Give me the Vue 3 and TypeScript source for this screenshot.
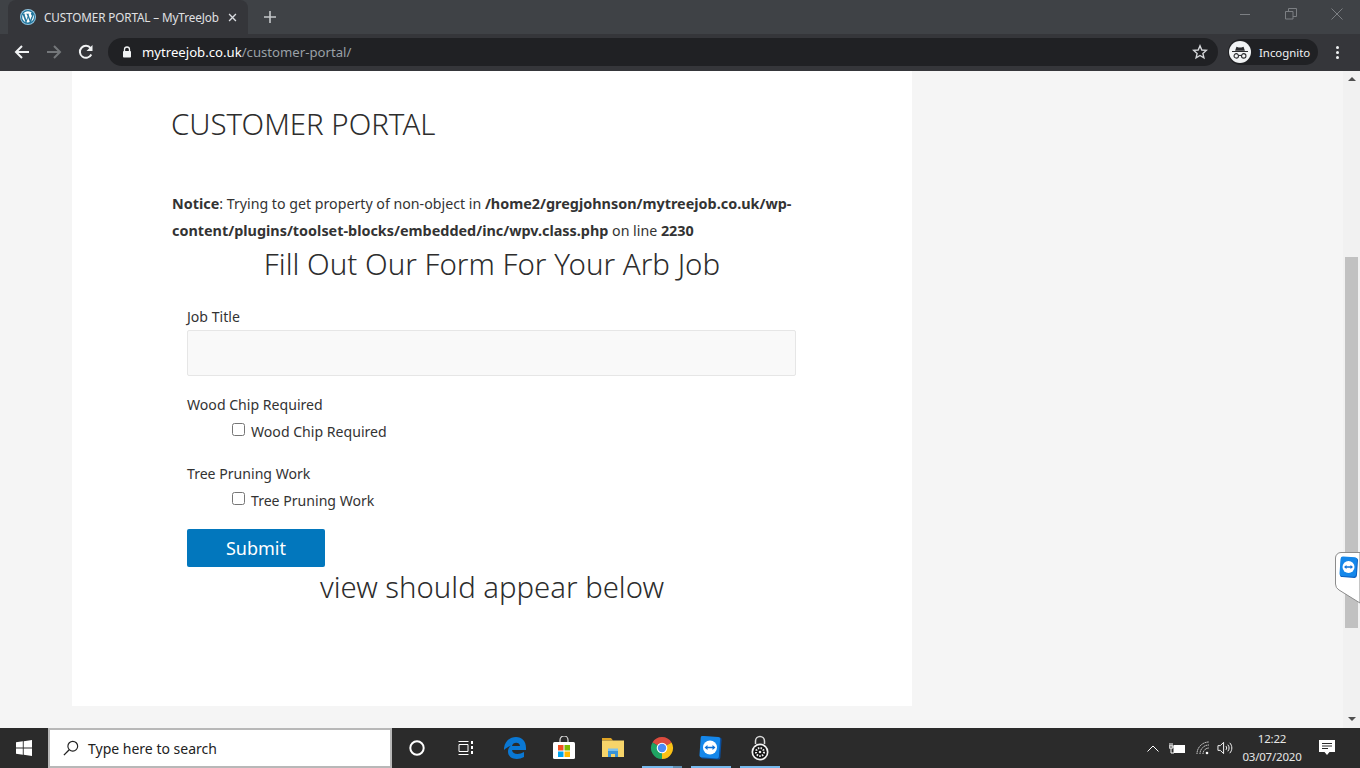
<template>
  <div class="screen">
    <div class="tabstrip">
      <div class="tab">
        <svg class="favicon" viewBox="0 0 16 16">
          <circle cx="8" cy="8" r="8" fill="#8fc3e0" />
          <circle cx="8" cy="8" r="7" fill="#21759b" />
          <path d="M2.200 8c0 2.300 1.300 4.300 3.300 5.200L2.700 5.600C2.400 6.300 2.200 7.100 2.200 8zM12 7.700c0-.7-.3-1.200-.5-1.600-.3-.5-.6-.9-.6-1.400 0-.5.4-1 1-1h.1C10.900 3.100 9.500 2.200 8 2.200c-2 0-3.800 1-4.800 2.600h.4c.6 0 1.500-.1 1.500-.1.300 0 .3.400 0 .5 0 0-.3 0-.6.100l1.900 5.700 1.200-3.500-.8-2.200c-.3 0-.6-.1-.6-.1-.3 0-.3-.5 0-.5 0 0 .9.100 1.400.100.600 0 1.500-.1 1.500-.1.300 0 .3.400 0 .5 0 0-.3 0-.6.100l1.900 5.600.5-1.700c.3-.8.500-1.300.5-1.800zM8.100 8.500l-1.600 4.700c.5.100 1 .2 1.500.2.600 0 1.200-.1 1.800-.3l-1.700-4.600zM13.200 5.200c0 .2.100.4.100.600 0 .6-.1 1.300-.4 2.100l-1.700 4.800c1.600-.9 2.700-2.700 2.700-4.700 0-1-.3-2-.7-2.800z" fill="#fff" />
        </svg>
        <span class="tab-title">CUSTOMER PORTAL – MyTreeJob</span>
        <svg class="tab-close" viewBox="0 0 10 10">
          <path d="M1.200 1.200l7.600 7.600M8.800 1.200L1.200 8.800" stroke="#dadce0" stroke-width="1.500" />
        </svg>
      </div>
      <svg class="new-tab" viewBox="0 0 12 12">
        <path d="M6 0v12M0 6h12" stroke="#c5c7ca" stroke-width="1.600" />
      </svg>
      <div class="window-controls">
        <svg viewBox="0 0 12 12"><path d="M1 6.500h10" stroke="#7c7f83" /></svg>
        <svg viewBox="0 0 12 12"><path d="M.5 3.500h7.500v7.500H.5zM3.500 3.500V.5h8v8H8" fill="none" stroke="#7c7f83" /></svg>
        <svg viewBox="0 0 12 12"><path d="M.5.500l11 11M11.500.500l-11 11" stroke="#7c7f83" /></svg>
      </div>
    </div>

    <div class="toolbar">
      <svg class="nav-icon" viewBox="0 0 16 16">
        <path d="M15 8H2M8 2L2 8l6 6" fill="none" stroke="#f1f3f4" stroke-width="2" />
      </svg>
      <svg class="nav-icon" viewBox="0 0 16 16">
        <path d="M1 8h13M8 2l6 6-6 6" fill="none" stroke="#74777a" stroke-width="2" />
      </svg>
      <svg class="nav-icon" viewBox="0 0 16 16">
        <path d="M13.300 10.500A6 6 0 1 1 12.600 4.100" fill="none" stroke="#f1f3f4" stroke-width="2" />
        <path d="M14.500 1v6h-6z" fill="#f1f3f4" />
      </svg>
      <div class="omnibox">
        <svg class="lock" viewBox="0 0 10 12">
          <path d="M2.500 5V3.500a2.500 2.500 0 0 1 5 0V5" fill="none" stroke="#f1f3f4" stroke-width="1.300" />
          <rect x="1" y="5" width="8" height="6.500" rx=".8" fill="#f1f3f4" />
        </svg>
        <span class="url"><b>mytreejob.co.uk</b>/customer-portal/</span>
        <svg class="star" viewBox="0 0 16 16">
          <path d="M8 1.800l1.800 4.200 4.500.4-3.400 3 1 4.400L8 11.500l-3.900 2.300 1-4.400-3.400-3 4.500-.4z" fill="none" stroke="#d5d7da" stroke-width="1.400" />
        </svg>
      </div>
      <div class="incognito">
        <span class="incognito-badge">
          <svg viewBox="0 0 18 14">
            <path d="M3.500 5l1.500-4.500 2.500.8h3l2.500-.8L14.500 5zM0 5.300h18v1.200H0z" fill="#2a2b2e" />
            <circle cx="4.800" cy="10.800" r="2.500" fill="none" stroke="#2a2b2e" stroke-width="1.200" />
            <circle cx="13.200" cy="10.800" r="2.500" fill="none" stroke="#2a2b2e" stroke-width="1.200" />
            <path d="M7.300 10.300h3.400" stroke="#2a2b2e" stroke-width="1.200" />
          </svg>
        </span>
        <span>Incognito</span>
      </div>
      <div class="kebab"><i></i><i></i><i></i></div>
    </div>

    <div class="viewport">
      <main class="page">
        <article class="card">
          <h1 class="entry-title">CUSTOMER PORTAL</h1>
          <p class="notice">
            <b>Notice</b>: Trying to get property of non-object in
            <b>/home2/gregjohnson/mytreejob.co.uk/wp-content/plugins/toolset-blocks/embedded/inc/wpv.class.php</b>
            on line <b>2230</b>
          </p>
          <h2 class="center-title">Fill Out Our Form For Your Arb Job</h2>
          <form class="job-form" @submit.prevent>
            <label class="field-label" for="job-title">Job Title</label>
            <input id="job-title" class="text-input" type="text" />
            <div v-for="item in checks" :key="item" class="check-group">
              <div class="field-label">{{ item }}</div>
              <label class="check-row">
                <input type="checkbox" />
                <span>{{ item }}</span>
              </label>
            </div>
            <button class="submit" type="submit">Submit</button>
          </form>
          <h2 class="center-title below">view should appear below</h2>
        </article>
      </main>
      <div class="scrollbar">
        <span class="arrow up"></span>
        <div class="track"><div class="thumb"></div></div>
        <span class="arrow down"></span>
      </div>
      <svg class="tv-tab" viewBox="0 0 25 54">
        <path d="M.5 6A5.500 5.500 0 0 1 6 .5H25V51L4 38Q.5 36 .5 32z" fill="#fff" stroke="#8c8c8c" />
        <g transform="translate(5 5)">
          <rect x="0.500" y="0.500" width="17" height="20" rx="2.500" fill="#0b5fc0" transform="rotate(4 9 10)" />
          <rect x="0" y="0" width="16.500" height="19.500" rx="2.500" fill="#1487ea" transform="rotate(4 9 10)" />
          <circle cx="8.500" cy="10" r="6" fill="#fff" />
          <path d="M4 10l2.500-2v1.300h4V8L13 10l-2.500 2v-1.300h-4V12z" fill="#0e70d6" />
        </g>
      </svg>
    </div>

    <div class="taskbar">
      <svg class="win-logo" viewBox="0 0 16 16">
        <path d="M0 2.300l6.800-1v6.200H0zM7.700 1.200L16 0v7.500H7.700zM0 8.500h6.800v6.200L0 13.700zM7.700 8.500H16V16l-8.300-1.200z" fill="#fff" />
      </svg>
      <div class="search">
        <svg viewBox="0 0 18 18">
          <circle cx="11" cy="7" r="5.500" fill="none" stroke="#222" stroke-width="1.300" />
          <path d="M7 11l-6 6" stroke="#222" stroke-width="1.500" />
        </svg>
        <span>Type here to search</span>
      </div>
      <div class="task-icons">
        <div class="task-icon">
          <svg class="s16" viewBox="0 0 16 16"><circle cx="8" cy="8" r="6.700" fill="none" stroke="#fff" stroke-width="2" /></svg>
        </div>
        <div class="task-icon">
          <svg class="s16" viewBox="0 0 16 16">
            <path d="M.5 1.500h10M.5 14.500h10M1 4.500h9v7H1z" fill="none" stroke="#fff" />
            <path d="M13 1h2v3h-2zM13 6h2v3h-2zM13 11h2v3h-2z" fill="#fff" />
          </svg>
        </div>
        <div class="task-icon">
          <svg class="s22" viewBox="0 0 22 22">
            <path d="M0 11C1 4 6 0 12 0c6 0 10 4 10 11v2H8c.5 4.500 7 5 12 2v5c-6 3.500-16 2.500-16-5.500 0-2.500 1-4.500 3-6-2 1-5 2.500-7 4.500zM8 9h8c0-4.500-7.500-4.500-8 0z" fill="#0a78d4" />
          </svg>
        </div>
        <div class="task-icon">
          <svg class="s24" viewBox="0 0 24 24">
            <path d="M8 7V4a4 4 0 0 1 8 0v3" fill="none" stroke="#ddd" stroke-width="1.200" />
            <rect x="1" y="6" width="22" height="17" rx="1.500" fill="#fff" />
            <rect x="6" y="9" width="5.500" height="5.500" fill="#f25022" />
            <rect x="12.500" y="9" width="5.500" height="5.500" fill="#7fba00" />
            <rect x="6" y="15.500" width="5.500" height="5.500" fill="#00a4ef" />
            <rect x="12.500" y="15.500" width="5.500" height="5.500" fill="#ffb900" />
          </svg>
        </div>
        <div class="task-icon">
          <svg class="s24" viewBox="0 0 24 22">
            <path d="M1 1h9l2 2.500h-11z" fill="#e0a526" />
            <path d="M1 3.500h22V20H1z" fill="#f6d46a" />
            <path d="M7 20v-6h10v6h-3v-3h-4v3z" fill="#3a94d8" />
            <path d="M7 11.500h10V14H7z" fill="#7cc2ee" />
          </svg>
        </div>
        <div class="task-icon">
          <svg class="s24" viewBox="0 0 24 24">
            <path d="M12 12L2.470 6.500A11 11 0 0 1 21.530 6.500z" fill="#dd4b3e" />
            <path d="M12 12L21.530 6.500A11 11 0 0 1 12 23z" fill="#fbc116" />
            <path d="M12 12V23A11 11 0 0 1 2.470 6.500z" fill="#1fa463" />
            <circle cx="12" cy="12" r="5.300" fill="#fff" />
            <circle cx="12" cy="12" r="4.200" fill="#4c8bf5" />
          </svg>
        </div>
        <div class="task-icon">
          <svg class="s24" viewBox="0 0 24 24">
            <rect x="2" y="1" width="20" height="22" rx="2" fill="#0b4f9e" transform="rotate(4 12 12)" />
            <rect x="1" y="0.500" width="19.500" height="21.500" rx="2" fill="#1587ea" transform="rotate(4 12 12)" />
            <circle cx="11" cy="11.500" r="7" fill="#fff" />
            <path d="M5.500 11.500l3-2.500v1.700h5V9l3 2.500-3 2.500v-1.700h-5V14z" fill="#0e70d6" />
          </svg>
        </div>
        <div class="task-icon">
          <svg class="s26" viewBox="0 0 20 26">
            <path d="M5.500 9V6a4.500 4.500 0 0 1 9 0v3" fill="none" stroke="#d8d8d8" stroke-width="1.500" />
            <circle cx="10" cy="17" r="8.500" fill="#f4f4f4" />
            <circle cx="10" cy="17" r="6.800" fill="#111" />
            <circle cx="10" cy="17" r="4" fill="none" stroke="#eee" stroke-dasharray="1.500 1.200" stroke-width="2" />
            <circle cx="10" cy="17" r="1.300" fill="#eee" />
          </svg>
        </div>
      </div>
      <div class="running-marks"><i class="chrome"></i><i class="chrome-split"></i><i class="viewer"></i><i class="lockapp"></i></div>
      <div class="tray">
        <svg class="caret" viewBox="0 0 12 7"><path d="M.5 6.500L6 1l5.500 5.500" fill="none" stroke="#fff" /></svg>
        <svg class="battery" viewBox="0 0 16 11">
          <rect x="5" y="2.500" width="10.500" height="7" fill="#fff" stroke="#fff" />
          <path d="M1 0v3M3 0v3M0 3h4v2H0zM2 5v5h3" stroke="#fff" fill="none" />
        </svg>
        <svg class="wifi" viewBox="0 0 14 14">
          <path d="M1 13A12 12 0 0 1 13 1M4 13a9 9 0 0 1 9-9M7 13a6 6 0 0 1 6-6" fill="none" stroke="#ddd" stroke-dasharray="1.500 .6" />
          <circle cx="11" cy="12" r="1.300" fill="#fff" />
        </svg>
        <svg class="volume" viewBox="0 0 17 14">
          <path d="M1 4.500h2.500L7 1v12L3.500 9.500H1z" fill="none" stroke="#fff" />
          <path d="M9.500 5c1 1.200 1 2.800 0 4M11.500 3.500c1.800 2 1.800 5 0 7M13.500 1.500c3 3 3 8 0 11" fill="none" stroke="#fff" />
        </svg>
        <div class="clock"><span>12:22</span><span>03/07/2020</span></div>
        <svg class="notify" viewBox="0 0 16 16">
          <path d="M0 0h16v12h-5.500L8 15l-2.500-3H0z" fill="#fff" />
          <path d="M3 3.500h10M3 6h10M3 8.500h6" stroke="#2a2a2a" />
        </svg>
      </div>
    </div>
  </div>
</template>

<script setup lang="ts">
const checks: string[] = ['Wood Chip Required', 'Tree Pruning Work']
</script>

<style>
html,
body {
  margin: 0;
  overflow: hidden;
}
</style>

<style scoped>
.screen {
  width: 1360px;
  height: 768px;
  display: flex;
  flex-direction: column;
  overflow: hidden;
  font-family: "Noto Sans", "Open Sans", sans-serif;
}

.tabstrip {
  height: 34px;
  flex: none;
  display: flex;
  align-items: flex-end;
  background: #3f4246;
}

.tab {
  width: 240px;
  height: 34px;
  margin-left: 8px;
  padding-left: 12px;
  box-sizing: border-box;
  display: flex;
  align-items: center;
  background: #35363a;
  border-radius: 8px 8px 0 0;
}

.favicon {
  width: 16px;
  height: 16px;
  flex: none;
}

.tab-title {
  margin-left: 8px;
  font-size: 11.700px;
  line-height: 16px;
  color: #e0e1e3;
  white-space: nowrap;
  letter-spacing: -0.1px;
}

.tab-close {
  width: 9px;
  height: 9px;
  margin-left: 9px;
  flex: none;
}

.new-tab {
  width: 12px;
  height: 12px;
  margin: 0 0 11px 16px;
}

.window-controls {
  margin-left: auto;
  align-self: flex-start;
  display: flex;
  gap: 34px;
  padding: 8px 17px 0 0;
}

.window-controls svg {
  width: 12px;
  height: 12px;
}

.toolbar {
  height: 37px;
  flex: none;
  padding-bottom: 1px;
  box-sizing: border-box;
  display: flex;
  align-items: center;
  background: #35363a;
}

.nav-icon {
  width: 16px;
  height: 16px;
  margin-left: 14px;
  flex: none;
}

.nav-icon + .nav-icon {
  margin-left: 16px;
}

.omnibox {
  width: 1110px;
  height: 28px;
  margin-left: 14px;
  padding: 0 10px 0 14px;
  box-sizing: border-box;
  display: flex;
  align-items: center;
  background: #202124;
  border-radius: 14px;
}

.lock {
  width: 10px;
  height: 12px;
  flex: none;
}

.url {
  margin-left: 10px;
  font-size: 13.170px;
  color: #9aa0a6;
}

.url b {
  font-weight: 400;
  color: #fff;
}

.star {
  width: 16px;
  height: 16px;
  margin-left: auto;
}

.incognito {
  width: 90px;
  height: 26px;
  margin-left: 10px;
  display: flex;
  align-items: center;
  gap: 8px;
  background: #202124;
  border-radius: 13px;
  font-size: 11.400px;
  color: #f1f3f4;
}

.incognito-badge {
  width: 22px;
  height: 22px;
  margin-left: 1px;
  display: flex;
  align-items: center;
  justify-content: center;
  background: #f1f3f4;
  border-radius: 50%;
}

.incognito-badge svg {
  width: 16px;
  height: 13px;
}

.kebab {
  margin-left: 18px;
  display: flex;
  flex-direction: column;
  gap: 2px;
}

.kebab i {
  width: 3px;
  height: 3px;
  background: #f1f3f4;
  border-radius: 50%;
}

.viewport {
  position: relative;
  height: 657px;
  flex: none;
  display: flex;
  background: #f5f5f5;
  overflow: hidden;
}

.page {
  flex: 1;
  padding-left: 72px;
}

.card {
  width: 840px;
  height: 635px;
  padding: 32px 100px 0;
  box-sizing: border-box;
  background: #fff;
  color: #333;
}

.entry-title {
  margin: 0 0 45px -1px;
  font-size: 29.400px;
  line-height: 42px;
  font-weight: 300;
  color: #2d2d2d;
}

.notice {
  margin: 0;
  font-size: 14.200px;
  line-height: 27px;
}

.notice b {
  font-size: 14.400px;
}

.center-title {
  margin: 0;
  font-size: 29.500px;
  line-height: 40px;
  font-weight: 300;
  text-align: center;
  color: #2d2d2d;
}

.job-form {
  padding: 23px 15px 0;
}

.field-label {
  display: block;
  font-size: 14.100px;
  line-height: 20px;
}

.text-input {
  display: block;
  width: 609px;
  height: 46px;
  margin-top: 3px;
  padding: 0 10px;
  box-sizing: border-box;
  background: #f9f9f9;
  border: 1px solid #e6e6e6;
  border-radius: 2px;
}

.check-group {
  margin-top: 19px;
}

.check-row {
  display: flex;
  align-items: center;
  gap: 6px;
  margin: 7px 0 0 45px;
  font-size: 14.100px;
  line-height: 20px;
}

.check-row input {
  width: 13px;
  height: 13px;
  margin: -6px 0 0 0;
}

.check-group + .check-group {
  margin-top: 22px;
}

.submit {
  display: block;
  width: 138px;
  height: 38px;
  margin-top: 18px;
  padding: 0;
  background: #0277bd;
  border: 0;
  border-radius: 2px;
  color: #fff;
  font: 18px "Noto Sans", sans-serif;
}

.center-title.below {
  margin-top: 0;
  font-size: 29.300px;
}

.scrollbar {
  width: 17px;
  flex: none;
  display: flex;
  flex-direction: column;
  background: #f1f1f1;
}

.track {
  flex: 1;
  padding: 169px 2px 0;
}

.thumb {
  height: 371px;
  background: #c1c1c1;
}

.arrow {
  width: 17px;
  height: 17px;
  flex: none;
  position: relative;
}

.arrow::after {
  content: "";
  position: absolute;
  left: 5px;
  top: 6px;
  border-left: 4px solid transparent;
  border-right: 4px solid transparent;
}

.arrow.up::after {
  border-bottom: 4px solid #505050;
}

.arrow.down::after {
  border-top: 4px solid #505050;
}

.tv-tab {
  position: absolute;
  left: 1335px;
  top: 481px;
  width: 25px;
  height: 54px;
}

.taskbar {
  position: relative;
  height: 40px;
  flex: none;
  display: flex;
  align-items: center;
  background: #2b2b2b;
}

.win-logo {
  width: 16px;
  height: 16px;
  margin-left: 16px;
  flex: none;
}

.search {
  width: 344px;
  height: 40px;
  margin-left: 16px;
  padding-left: 13px;
  box-sizing: border-box;
  display: flex;
  align-items: center;
  gap: 9px;
  background: #fff;
  border: 2px solid #b8b8b8;
  font-size: 14px;
  color: #222;
}

.search svg {
  width: 16px;
  height: 16px;
}

.task-icons {
  display: flex;
  align-items: center;
}

.task-icon {
  width: 49px;
  display: flex;
  justify-content: center;
}

.s16 {
  width: 16px;
  height: 16px;
}

.s22 {
  width: 22px;
  height: 22px;
}

.s24 {
  width: 24px;
  height: 24px;
}

.s26 {
  width: 20px;
  height: 26px;
}

.running-marks i {
  position: absolute;
  bottom: 0;
  height: 2px;
  background: #76b9ed;
}

.chrome {
  left: 642px;
  width: 31px;
}

.chrome-split {
  left: 673px;
  width: 9px;
  opacity: 0.7;
}

.viewer {
  left: 691px;
  width: 40px;
}

.lockapp {
  left: 740px;
  width: 40px;
}

.tray {
  margin-left: auto;
  padding-right: 25px;
  display: flex;
  align-items: center;
  color: #fff;
}

.caret {
  width: 12px;
  height: 7px;
}

.battery {
  width: 16px;
  height: 11px;
  margin-left: 10px;
}

.wifi {
  width: 14px;
  height: 14px;
  margin-left: 11px;
}

.volume {
  width: 16px;
  height: 14px;
  margin-left: 7px;
}

.clock {
  width: 60px;
  margin-left: 9px;
  display: flex;
  flex-direction: column;
  align-items: center;
  font-size: 11.500px;
  line-height: 18px;
  color: #e6e6e6;
  letter-spacing: -0.2px;
}

.notify {
  width: 16px;
  height: 16px;
  margin-left: 17px;
}
</style>
